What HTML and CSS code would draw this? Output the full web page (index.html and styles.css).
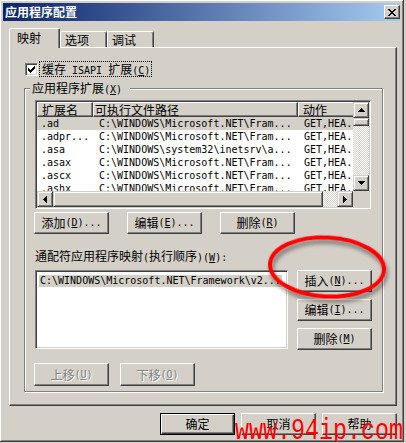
FILE: index.html
```html
<!DOCTYPE html>
<html lang="zh-CN">
<head>
    <meta charset="UTF-8">
    <title>应用程序配置</title>
    <link rel="stylesheet" href="styles.css">
</head>
<body>
    <div class="window">
        <div class="titlebar">
            <span class="title">应用程序配置</span>
            <span class="close">
                <svg width="8" height="7" viewBox="0 0 8 7"><path d="M0 0h2v1H0z M6 0h2v1H6z M1 1h2v1H1z M5 1h2v1H5z M2 2h4v1H2z M3 3h2v1H3z M2 4h4v1H2z M1 5h2v1H1z M5 5h2v1H5z M0 6h2v1H0z M6 6h2v1H6z"/></svg>
            </span>
        </div>

        <div class="tabs">
            <div class="tab active">映射</div>
            <div class="tab">选项</div>
            <div class="tab">调试</div>
        </div>

        <div class="panel">
            <div class="check-row">
                <span class="checkbox">
                    <svg width="7" height="7" viewBox="0 0 7 7"><path d="M6 0h1v1H6z M5 1h2v1H5z M0 2h1v1H0z M4 2h3v1H4z M0 3h2v1H0z M3 3h3v1H3z M0 4h5v1H0z M1 5h3v1H1z M2 6h1v1H2z"/></svg>
                </span>
                <span class="focus">缓存<span class="m"> ISAPI </span>扩展<span class="m">(<u>C</u>)</span></span>
            </div>

            <div class="group">
                <span class="group-title">应用程序扩展<span class="m">(<u>X</u>)</span></span>

                <div class="listview">
                    <div class="lv-body">
                        <div class="lv-head">
                            <span class="c1">扩展名</span>
                            <span class="c2">可执行文件路径</span>
                            <span class="c3">动作</span>
                        </div>
                        <div class="lv-row sel">
                            <span class="c1">.ad</span><span class="c2">C:\WINDOWS\Microsoft.NET\Fram...</span><span class="c3">GET,HEA...</span>
                        </div>
                        <div class="lv-row">
                            <span class="c1">.adpr...</span><span class="c2">C:\WINDOWS\Microsoft.NET\Fram...</span><span class="c3">GET,HEA...</span>
                        </div>
                        <div class="lv-row">
                            <span class="c1">.asa</span><span class="c2">C:\WINDOWS\system32\inetsrv\a...</span><span class="c3">GET,HEA...</span>
                        </div>
                        <div class="lv-row">
                            <span class="c1">.asax</span><span class="c2">C:\WINDOWS\Microsoft.NET\Fram...</span><span class="c3">GET,HEA...</span>
                        </div>
                        <div class="lv-row">
                            <span class="c1">.ascx</span><span class="c2">C:\WINDOWS\Microsoft.NET\Fram...</span><span class="c3">GET,HEA...</span>
                        </div>
                        <div class="lv-row">
                            <span class="c1">.ashx</span><span class="c2">C:\WINDOWS\Microsoft.NET\Fram...</span><span class="c3">GET,HEA...</span>
                        </div>
                    </div>
                    <div class="vscroll">
                        <span class="sb-btn"><svg width="7" height="4" viewBox="0 0 7 4"><path d="M3 0h1v1h1v1h1v1h1v1H0V3h1V2h1V1h1z"/></svg></span>
                        <span class="sb-thumb v"></span>
                        <span class="sb-track"></span>
                        <span class="sb-btn"><svg width="7" height="4" viewBox="0 0 7 4"><path d="M0 0h7v1H6v1H5v1H4v1H3V3H2V2H1V1H0z"/></svg></span>
                    </div>
                    <div class="hscroll">
                        <span class="sb-btn"><svg width="4" height="7" viewBox="0 0 4 7"><path d="M3 0h1v7H3V6H2V5H1V4H0V3h1V2h1V1h1z"/></svg></span>
                        <span class="sb-thumb h"></span>
                        <span class="sb-track"></span>
                        <span class="sb-btn"><svg width="4" height="7" viewBox="0 0 4 7"><path d="M0 0h1v1h1v1h1v1h1v1H3v1H2v1H1v1H0z"/></svg></span>
                    </div>
                    <div class="corner"></div>
                </div>

                <div class="btn-row">
                    <span class="btn">添加<span class="m">(<u>D</u>)...</span></span>
                    <span class="btn">编辑<span class="m">(<u>E</u>)...</span></span>
                    <span class="btn">删除<span class="m">(<u>R</u>)</span></span>
                </div>

                <div class="label">通配符应用程序映射<span class="m">(</span>执行顺序<span class="m">)(<u>W</u>):</span></div>

                <div class="map-row">
                    <div class="listbox">
                        <span class="item">C:\WINDOWS\Microsoft.NET\Framework\v2...</span>
                    </div>
                    <div class="btn-col">
                        <span class="btn">插入<span class="m">(<u>N</u>)...</span></span>
                        <span class="btn">编辑<span class="m">(<u>I</u>)...</span></span>
                        <span class="btn">删除<span class="m">(<u>M</u>)</span></span>
                    </div>
                </div>

                <div class="btn-row move">
                    <span class="btn disabled">上移<span class="m">(<u>U</u>)</span></span>
                    <span class="btn disabled">下移<span class="m">(<u>O</u>)</span></span>
                </div>
            </div>
        </div>

        <div class="dlg-buttons">
            <span class="btn default">确定</span>
            <span class="btn">取消</span>
            <span class="btn">帮助</span>
        </div>

        <!-- annotation drawn over the screenshot -->
        <svg class="overlay" width="406" height="443" viewBox="0 0 406 443">
            <defs>
                <filter id="shadow" x="-20%" y="-40%" width="140%" height="180%">
                    <feDropShadow dx="2" dy="4" stdDeviation="2" flood-color="#000" flood-opacity="0.45"/>
                </filter>
            </defs>
            <ellipse cx="327" cy="267" rx="57" ry="29.5" transform="rotate(3 327 267)" fill="none" stroke="#f00" stroke-width="4" filter="url(#shadow)"/>
            <text class="watermark" x="235" y="439" textLength="168" lengthAdjust="spacingAndGlyphs">www.94ip.com</text>
        </svg>
    </div>
</body>
</html>
```

FILE: styles.css
```css
body {
    margin: 0;
    background: #d4d0c8;
    font-family: "Noto Sans CJK SC", sans-serif;
    font-size: 12px;
    line-height: 14px;
    color: #000;
}
.m {
    font-family: "DejaVu Sans Mono", monospace;
    font-size: 10px;
}
u {
    text-underline-offset: 1px;
}
.window {
    position: relative;
    box-sizing: border-box;
    width: 405px;
    height: 443px;
    margin: -1px 0 0 -1px;
    padding: 3px;
    border: 1px solid;
    border-color: #d4d0c8 #404040 #404040 #d4d0c8;
    box-shadow: inset 1px 1px #fff, inset -1px -1px #808080;
    background: #d4d0c8;
    display: flex;
    flex-direction: column;
}

/* title bar */
.titlebar {
    height: 18px;
    display: flex;
    align-items: center;
    justify-content: space-between;
    background: linear-gradient(to right, #0a246a, #a6caf0);
}
.title {
    color: #fff;
    font-weight: bold;
    padding-left: 2px;
}
.close {
    box-sizing: border-box;
    width: 16px;
    height: 14px;
    display: flex;
    align-items: center;
    justify-content: center;
    background: #d4d0c8;
    border: 1px solid;
    border-color: #fff #404040 #404040 #fff;
    box-shadow: inset -1px -1px #808080;
}
.close svg, .checkbox svg, .sb-btn svg {
    shape-rendering: crispEdges;
    fill: #000;
}

/* tabs */
.tabs {
    display: flex;
    align-items: flex-end;
    margin-top: 7px;
    padding-left: 6px;
}
.tab {
    box-sizing: border-box;
    width: 47px;
    height: 16px;
    padding: 1px 0 0 4px;
    border: 1px solid #fff;
    border-bottom: none;
    border-right-color: #404040;
    border-radius: 2px 2px 0 0;
    box-shadow: inset -1px 0 #808080;
    background: #d4d0c8;
}
.tab.active {
    position: relative;
    z-index: 1;
    width: 51px;
    height: 20px;
    margin-bottom: -1px;
    padding: 2px 0 0 7px;
}
.panel {
    box-sizing: border-box;
    height: 359px;
    margin: 0 3px 0 6px;
    border: 1px solid;
    border-color: #fff #404040 #404040 #fff;
    box-shadow: inset -1px -1px #808080;
    display: flex;
    flex-direction: column;
}

/* checkbox */
.check-row {
    display: flex;
    align-items: center;
    height: 16px;
    margin: 13px 0 0 15px;
}
.checkbox {
    box-sizing: border-box;
    width: 13px;
    height: 13px;
    display: flex;
    align-items: center;
    justify-content: center;
    background: #fff;
    border: 1px solid;
    border-color: #808080 #fff #fff #808080;
    box-shadow: inset 1px 1px #404040, inset -1px -1px #d4d0c8;
}
.focus {
    box-sizing: border-box;
    height: 16px;
    margin-left: 1px;
    padding: 0 1px 0 2px;
    border: 1px dotted #000;
}

/* group box */
.group {
    position: relative;
    box-sizing: border-box;
    height: 304px;
    margin: 11px 13px 0 14px;
    padding: 11px 0 0 10px;
    border: 1px solid #808080;
    box-shadow: inset 1px 1px #fff, 1px 1px #fff;
}
.group-title {
    position: absolute;
    top: -8px;
    left: 5px;
    padding: 0 8px 0 2px;
    background: #d4d0c8;
}

/* list view */
.listview, .listbox {
    box-sizing: border-box;
    padding: 1px;
    background: #fff;
    border: 1px solid;
    border-color: #808080 #fff #fff #808080;
    box-shadow: inset 1px 1px #404040, inset -1px -1px #d4d0c8;
}
.listview {
    width: 336px;
    height: 109px;
    display: grid;
    grid-template-columns: 1fr 16px;
    grid-template-rows: 1fr 16px;
}
.lv-body {
    overflow: hidden;
    min-width: 0;
}
.lv-head, .lv-row {
    display: flex;
    white-space: nowrap;
}
.lv-head span {
    box-sizing: border-box;
    height: 15px;
    line-height: 13px;
    flex: none;
    overflow: hidden;
    background: #d4d0c8;
    border: 1px solid;
    border-color: #fff #404040 #404040 #fff;
    box-shadow: inset -1px -1px #808080;
}
.lv-row {
    height: 13px;
    line-height: 13px;
    font-family: "DejaVu Sans Mono", monospace;
    font-size: 10px;
}
.lv-row span {
    box-sizing: border-box;
    flex: none;
    overflow: hidden;
}
.lv-row.sel {
    background: #d4d0c8;
}
.c1 { width: 56px; padding-left: 4px; }
.c2 { width: 205px; padding-left: 6px; }
.c3 { width: 70px; padding-left: 6px; }
.lv-head .c1 { padding-left: 4px; }
.lv-head .c2 { padding-left: 1px; }
.lv-head .c3 { padding-left: 4px; }

/* scroll bars */
.vscroll, .hscroll {
    display: flex;
    background: #d4d0c8;
}
.vscroll {
    flex-direction: column;
}
.sb-btn, .sb-thumb {
    box-sizing: border-box;
    flex: none;
    background: #d4d0c8;
    border: 1px solid;
    border-color: #d4d0c8 #404040 #404040 #d4d0c8;
    box-shadow: inset 1px 1px #fff, inset -1px -1px #808080;
}
.sb-btn {
    width: 16px;
    height: 16px;
    display: flex;
    align-items: center;
    justify-content: center;
}
.sb-thumb.v { height: 8px; }
.sb-thumb.h { width: 270px; }
.sb-track {
    flex: 1;
    background: conic-gradient(#fff 25%, #d4d0c8 0 50%, #fff 0 75%, #d4d0c8 0);
    background-size: 2px 2px;
}
.corner {
    background: #d4d0c8;
}

/* buttons */
.btn {
    box-sizing: border-box;
    width: 75px;
    height: 22px;
    display: flex;
    align-items: center;
    justify-content: center;
    white-space: nowrap;
    background: #d4d0c8;
    border: 1px solid;
    border-color: #fff #404040 #404040 #fff;
    box-shadow: inset -1px -1px #808080;
}
.btn.default {
    border-color: #000;
    box-shadow: inset 1px 1px #fff, inset -1px -1px #404040, inset -2px -2px #808080;
}
.btn.disabled {
    color: #808080;
    text-shadow: 1px 1px #fff;
}
.btn-row {
    display: flex;
    gap: 18px;
    margin: 3px 0 0 -1px;
}
.btn-row.move {
    gap: 11px;
    margin-top: 13px;
}
.btn-row.move .btn {
    height: 23px;
}
.label {
    margin-top: 15px;
}
.map-row {
    display: flex;
    gap: 9px;
    margin-top: 5px;
}
.listbox {
    width: 253px;
    height: 79px;
}
.item {
    display: inline-block;
    margin: 1px 0 0 2px;
    padding: 0 1px;
    line-height: 12px;
    background: #d4d0c8;
    font-family: "DejaVu Sans Mono", monospace;
    font-size: 10px;
    white-space: nowrap;
}
.btn-col {
    display: flex;
    flex-direction: column;
    gap: 7px;
}
.dlg-buttons {
    display: flex;
    justify-content: flex-end;
    gap: 6px;
    margin-top: 7px;
    padding-right: 3px;
}

/* annotation overlay */
.overlay {
    position: absolute;
    top: 0;
    left: 0;
    pointer-events: none;
}
.watermark {
    font-family: "Liberation Mono", monospace;
    font-size: 30px;
    fill: #f00;
}
```
